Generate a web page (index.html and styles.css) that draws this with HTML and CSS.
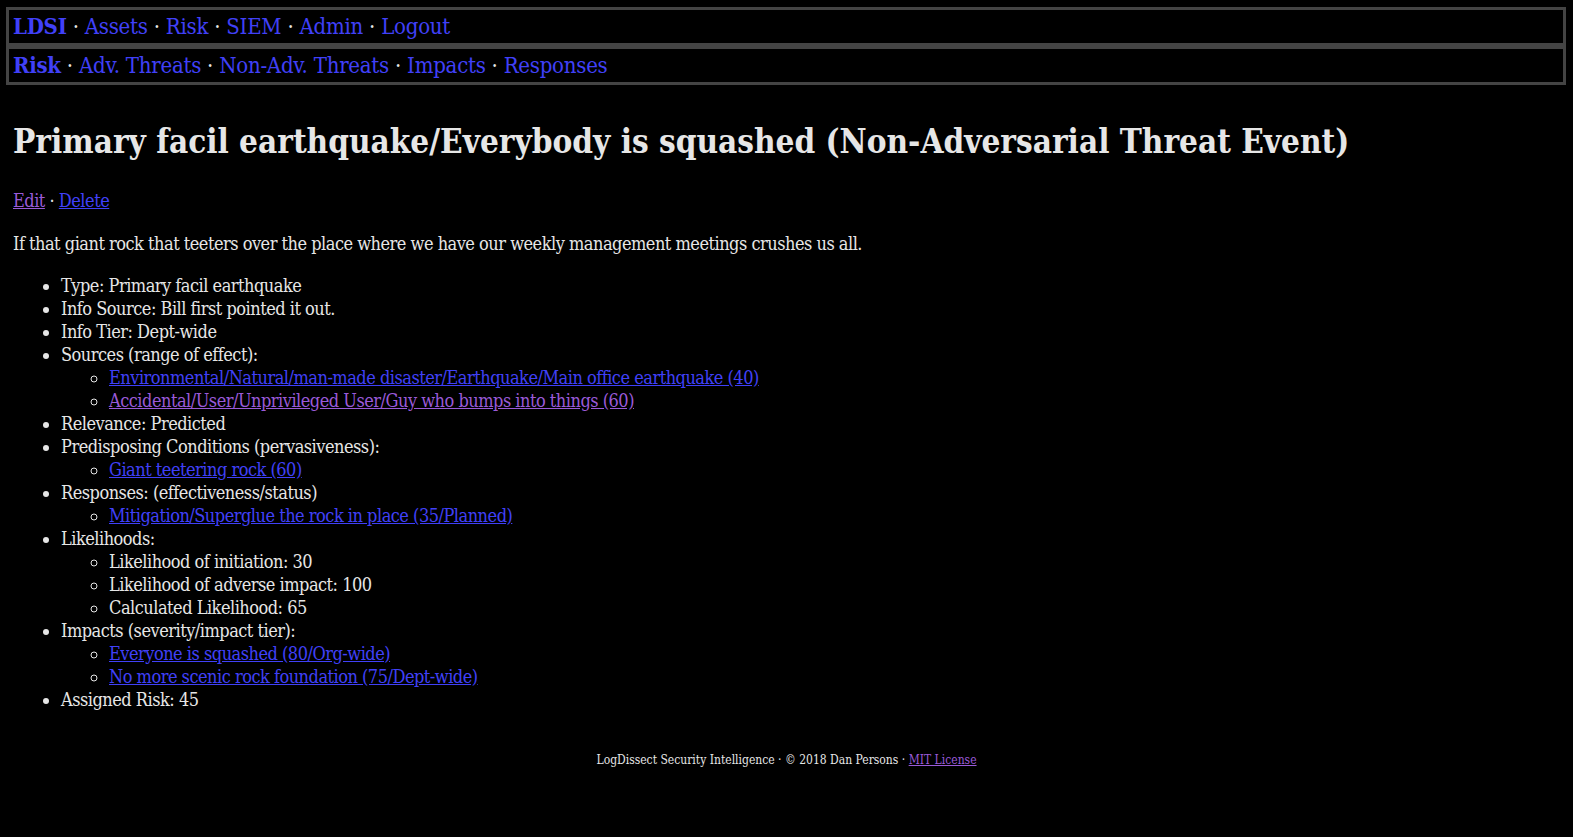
FILE: index.html
```html
<!DOCTYPE html>
<html>
<head>
<meta charset="utf-8">
<title>LDSI</title>
<link rel="stylesheet" href="styles.css">
</head>
<body>
<nav class="nav">
  <div class="navbar"><a class="brand" href="#">LDSI</a> · <a href="#">Assets</a> · <a href="#">Risk</a> · <a href="#">SIEM</a> · <a href="#">Admin</a> · <a href="#">Logout</a></div>
  <div class="navbar"><a class="brand" href="#">Risk</a> · <a href="#">Adv. Threats</a> · <a href="#">Non-Adv. Threats</a> · <a href="#">Impacts</a> · <a href="#">Responses</a></div>
</nav>
<main class="main">
  <h1 class="title">Primary facil earthquake/Everybody is squashed (Non-Adversarial Threat Event)</h1>
  <p class="actions"><a class="visited" href="#">Edit</a> · <a href="#">Delete</a></p>
  <p class="desc">If that giant rock that teeters over the place where we have our weekly management meetings crushes us all.</p>
  <ul class="list">
    <li>Type: Primary facil earthquake</li>
    <li>Info Source: Bill first pointed it out.</li>
    <li>Info Tier: Dept-wide</li>
    <li>Sources (range of effect):
      <ul class="sublist">
        <li><a href="#">Environmental/Natural/man-made disaster/Earthquake/Main office earthquake (40)</a></li>
        <li><a class="visited" href="#">Accidental/User/Unprivileged User/Guy who bumps into things (60)</a></li>
      </ul>
    </li>
    <li>Relevance: Predicted</li>
    <li>Predisposing Conditions (pervasiveness):
      <ul class="sublist">
        <li><a href="#">Giant teetering rock (60)</a></li>
      </ul>
    </li>
    <li>Responses: (effectiveness/status)
      <ul class="sublist">
        <li><a href="#">Mitigation/Superglue the rock in place (35/Planned)</a></li>
      </ul>
    </li>
    <li>Likelihoods:
      <ul class="sublist">
        <li>Likelihood of initiation: 30</li>
        <li>Likelihood of adverse impact: 100</li>
        <li>Calculated Likelihood: 65</li>
      </ul>
    </li>
    <li>Impacts (severity/impact tier):
      <ul class="sublist">
        <li><a href="#">Everyone is squashed (80/Org-wide)</a></li>
        <li><a href="#">No more scenic rock foundation (75/Dept-wide)</a></li>
      </ul>
    </li>
    <li>Assigned Risk: 45</li>
  </ul>
  <footer class="footer">LogDissect Security Intelligence · © 2018 Dan Persons · <a class="visited" href="#">MIT License</a></footer>
</main>
</body>
</html>
```

FILE: styles.css
```css
html, body {
  background: #000;
}
body {
  margin: 0;
  color: #e6e6e6;
  font-family: "DejaVu Serif", serif;
  font-stretch: condensed;
  font-size: 18px;
  line-height: 23px;
  letter-spacing: -0.5px;
}
a {
  color: #4040f8;
}
a.visited {
  color: #9a5ad8;
}
.nav {
  margin: 7px 7px 0 6px;
}
.navbar {
  border: 3px solid #444;
  padding: 4px 4px;
  font-size: 22px;
  line-height: 25px;
  letter-spacing: -0.25px;
}
.navbar a {
  text-decoration: none;
}
.navbar a.brand {
  font-weight: bold;
}
.main {
  padding: 0 13px;
}
.title {
  font-size: 33px;
  line-height: 41px;
  font-weight: bold;
  letter-spacing: 0;
  margin: 36px 0 0;
}
.actions {
  margin: 27px 0 0;
}
.desc {
  margin: 20px 0 0;
}
.list {
  margin: 19px 0 0;
  padding-left: 48px;
  list-style: disc;
}
.sublist {
  margin: 0;
  padding-left: 48px;
  list-style: circle;
}
.footer {
  margin-top: 41px;
  text-align: center;
  font-size: 12px;
  line-height: 16px;
  letter-spacing: 0;
}
```
